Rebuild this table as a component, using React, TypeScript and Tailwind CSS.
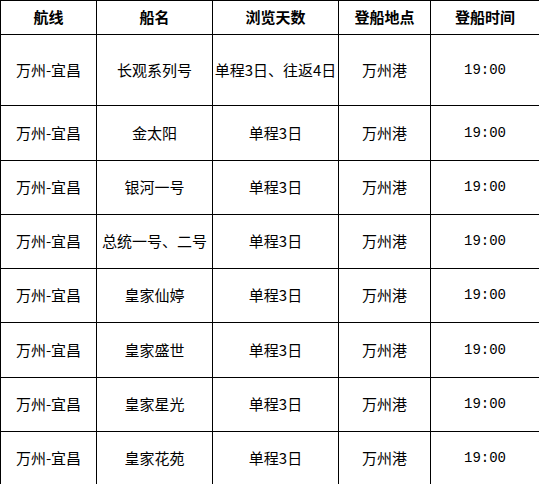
import React from 'react';

const rows = [
  { ship: '长观系列号', days: '单程3日、往返4日', h: 'h-[71px]' },
  { ship: '金太阳', days: '单程3日', h: 'h-[55px]' },
  { ship: '银河一号', days: '单程3日', h: 'h-[54px]' },
  { ship: '总统一号、二号', days: '单程3日', h: 'h-[54px]' },
  { ship: '皇家仙婷', days: '单程3日', h: 'h-[54px]' },
  { ship: '皇家盛世', days: '单程3日', h: 'h-[55px]' },
  { ship: '皇家星光', days: '单程3日', h: 'h-[54px]' },
  { ship: '皇家花苑', days: '单程3日', h: 'h-[53px]' },
];

const headers = ['航线', '船名', '浏览天数', '登船地点', '登船时间'];

const App: React.FC = () => {
  return (
    <div className="w-[539px] bg-white text-black font-['Noto_Sans_CJK_SC',sans-serif] text-[15px]">
      <table className="w-[539px] table-fixed border-collapse">
        <colgroup>
          <col className="w-[96px]" />
          <col className="w-[116px]" />
          <col className="w-[126px]" />
          <col className="w-[92px]" />
          <col className="w-[109px]" />
        </colgroup>
        <thead>
          <tr className="h-[34px]">
            {headers.map((h) => (
              <th key={h} className="border border-black p-0 text-center font-bold text-[15px]">
                {h}
              </th>
            ))}
          </tr>
        </thead>
        <tbody>
          {rows.map((r, i) => (
            <tr key={i} className={r.h}>
              <td className="border border-black p-0 text-center">万州-宜昌</td>
              <td className="border border-black p-0 text-center">{r.ship}</td>
              <td className="border border-black p-0 text-center whitespace-nowrap">{r.days}</td>
              <td className="border border-black p-0 text-center">万州港</td>
              <td className="border border-black p-0 text-center font-['Liberation_Mono',monospace] text-[14px] font-normal">
                19:00
              </td>
            </tr>
          ))}
        </tbody>
      </table>
    </div>
  );
};

export default App;
